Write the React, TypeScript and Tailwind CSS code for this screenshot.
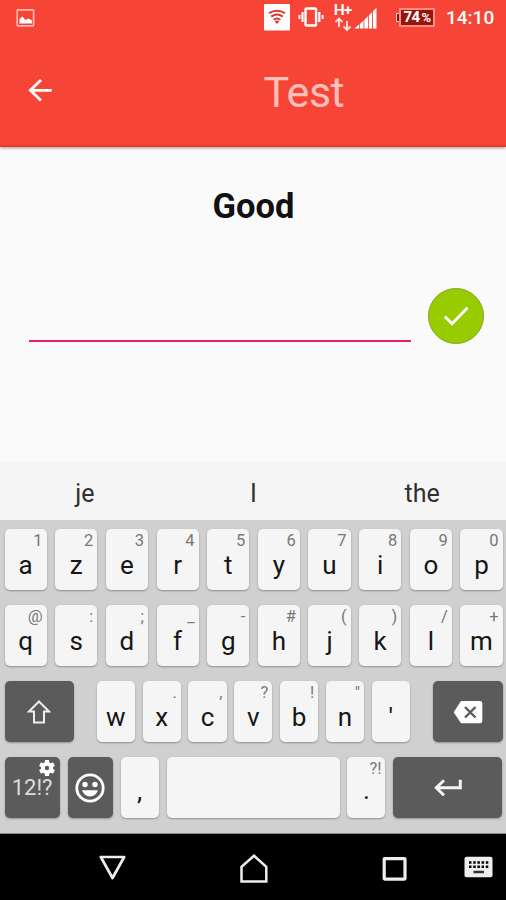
import React from 'react';

interface KeyData {
  label: string;
  hint?: string;
}

const ROW_ONE: KeyData[] = [
  { label: 'a', hint: '1' },
  { label: 'z', hint: '2' },
  { label: 'e', hint: '3' },
  { label: 'r', hint: '4' },
  { label: 't', hint: '5' },
  { label: 'y', hint: '6' },
  { label: 'u', hint: '7' },
  { label: 'i', hint: '8' },
  { label: 'o', hint: '9' },
  { label: 'p', hint: '0' },
];

const ROW_TWO: KeyData[] = [
  { label: 'q', hint: '@' },
  { label: 's', hint: ':' },
  { label: 'd', hint: ';' },
  { label: 'f', hint: '_' },
  { label: 'g', hint: '-' },
  { label: 'h', hint: '#' },
  { label: 'j', hint: '(' },
  { label: 'k', hint: ')' },
  { label: 'l', hint: '/' },
  { label: 'm', hint: '+' },
];

const ROW_THREE: KeyData[] = [
  { label: 'w' },
  { label: 'x', hint: '.' },
  { label: 'c', hint: ',' },
  { label: 'v', hint: '?' },
  { label: 'b', hint: '!' },
  { label: 'n', hint: '"' },
  { label: "'" },
];

const SUGGESTIONS = ['je', 'I', 'the'];

const LIGHT_KEY = 'flex h-[61px] flex-col rounded-[5px] bg-[#f5f5f5] pt-1 shadow-[0_1px_2px_#8f8f8f]';
const DARK_KEY = 'flex h-[61px] items-center justify-center rounded-[5px] bg-[#5b5b5b] text-[#f5f5f5] shadow-[0_1px_2px_#8f8f8f]';

function LetterKey({ label, hint }: KeyData) {
  return (
    <button className={LIGHT_KEY}>
      <span className="h-4 w-full pr-1 text-right text-[16.5px] leading-4 text-[#777]">{hint}</span>
      <span className="mt-[3px] w-full text-center text-[26px] leading-[26px] text-[#161616]">{label}</span>
    </button>
  );
}

function StatusBar() {
  return (
    <div className="flex h-9 items-start text-white">
      {/* Screenshot-Benachrichtigung */}
      <svg className="mt-[9px] ml-4 h-[18px] w-[19px]" viewBox="0 0 19 18">
        <rect x="1.2" y="0.8" width="16.4" height="16" rx="0.8" fill="none" stroke="#ffb8b0" strokeWidth="1.7" />
        <path d="M3.5 14.5V10L6.5 7.5L9.5 11L12.5 9.5L16 11.5V14.5Z" fill="#fff" />
      </svg>

      {/* WLAN */}
      <svg className="mt-1 ml-[229px] h-[27px] w-[26px]" viewBox="0 0 26 27">
        <rect width="26" height="26.5" rx="1" fill="#fff" />
        <g fill="none" stroke="#d93a2e" strokeWidth="2">
          <path d="M5 9.2Q13 4.2 21 9.2" />
          <path d="M7.2 12.6Q13 8.6 18.8 12.6" />
          <path d="M9.6 15.8Q13 13.2 16.4 15.8" />
        </g>
        <path d="M10.6 17.2Q13 15.6 15.4 17.2L13 20Z" fill="#d93a2e" />
      </svg>

      {/* Vibration */}
      <svg className="mt-[7px] ml-2 h-5 w-[26px]" viewBox="0 0 26 20" fill="none" stroke="#fff">
        <rect x="7.5" y="1.5" width="10.6" height="17" rx="1" strokeWidth="2.4" />
        <path d="M4.5 5V15M21.3 5V15" strokeWidth="2.2" />
        <path d="M1.4 8V12M24.6 8V12" strokeWidth="2" />
      </svg>

      {/* Mobile Daten */}
      <div className="mt-[3px] ml-2 flex w-[21px] flex-col items-center">
        <span className="h-[14px] text-[15.5px] leading-[15px] font-semibold tracking-[-1px]">H+</span>
        <svg className="h-[14px] w-[18px]" viewBox="0 0 18 14" fill="none" stroke="#ffe5e2" strokeWidth="1.8">
          <path d="M5 10V2M1.5 5L5 1.5L8.5 5" />
          <path d="M13 4V12.5M9.5 9.5L13 13L16.5 9.5" />
        </svg>
      </div>
      <svg className="mt-[7px] ml-[1px] h-[22px] w-[23px]" viewBox="0 0 23 22" fill="#fff">
        <path d="M0.500 21.500L5 17.500V21.500ZM5.800 17L9.500 13.500V21.500H5.800ZM10.300 12.800L14 9.200V21.500H10.300ZM14.800 8.300L18 5.200V21.500H14.800ZM18.900 4.200L22.500 0.800V21.500H18.900Z" />
      </svg>

      {/* Akku */}
      <div className="mt-2 ml-[19px] flex h-[19px] items-center">
        <div className="h-[9px] w-[3px] border border-r-0 border-[#ffc1ba] bg-[#96160f]" />
        <div className="flex h-[19px] w-[36px] items-center justify-center border-2 border-[#ff8c82] bg-[#96160f] text-[15px] leading-none font-bold tracking-[-0.6px] whitespace-nowrap">
          <span>74</span>
          <span className="ml-[2px] text-[13px]">%</span>
        </div>
      </div>

      <span className="mt-2 ml-[11px] text-[19px] leading-5 font-medium">14:10</span>
    </div>
  );
}

function AppBar() {
  return (
    <div className="flex h-[110px] items-start">
      <svg className="mt-[42px] ml-[27px] h-6 w-[26px]" viewBox="0 0 26 24" fill="none" stroke="#fff" strokeWidth="2.8">
        <path d="M24.7 12.3H3M14 2L3.3 12.3L14 22.6" />
      </svg>
      <h1 className="mt-[35px] ml-[210.5px] text-[43px] leading-[43px] tracking-[-0.5px] text-[#ffc0ba]">Test</h1>
    </div>
  );
}

function Keyboard() {
  return (
    <div className="h-[372px] bg-[#f5f5f5]">
      <div className="grid h-[58px] grid-cols-3 items-center text-center text-[25px] text-[#303030]">
        {SUGGESTIONS.map((word) => (
          <span key={word} className="pt-[5px] pl-px">{word}</span>
        ))}
      </div>

      <div className="flex h-[314px] flex-col gap-[15px] border-b border-[#888] bg-[#d0d0d0] pt-[9px] pr-[3.5px] pl-[4.6px]">
        {[ROW_ONE, ROW_TWO].map((row, i) => (
          <div key={i} className="grid grid-cols-10 gap-[8.6px]">
            {row.map((k) => (
              <LetterKey key={k.label} {...k} />
            ))}
          </div>
        ))}

        <div className="flex justify-between">
          <button className={`${DARK_KEY} w-[69px]`}>
            <svg className="h-6 w-6" viewBox="0 0 24 24" fill="none" stroke="#eee" strokeWidth="2">
              <path d="M12 1.5L22 11.5H17V22.5H7V11.5H2Z" />
            </svg>
          </button>
          <div className="grid w-[313px] grid-cols-7 gap-[7.7px]">
            {ROW_THREE.map((k) => (
              <LetterKey key={k.label} {...k} />
            ))}
          </div>
          <button className={`${DARK_KEY} w-[69.5px]`}>
            <svg className="h-6 w-[30px]" viewBox="0 0 30 24">
              <path d="M8 1H27Q29.3 1 29.3 3.3V21Q29.3 23.3 27 23.3H8L0.7 12.2Z" fill="#fff" />
              <path d="M12 7L22.5 17.5M22.5 7L12 17.5" stroke="#5b5b5b" strokeWidth="2.4" />
            </svg>
          </button>
        </div>

        <div className="flex justify-between">
          <button className={`${DARK_KEY} relative w-[55px]`}>
            <span className="text-[22px] leading-none text-[#ddd]">12!?</span>
            <svg className="absolute top-[3px] right-[4.5px] h-4 w-4" viewBox="2 2 20 20" fill="#fff">
              <path d="M19.43 12.98c.04-.32.07-.64.07-.98s-.03-.66-.07-.98l2.11-1.65c.19-.15.24-.42.12-.64l-2-3.46c-.12-.22-.39-.3-.61-.22l-2.49 1c-.52-.4-1.08-.73-1.69-.98l-.38-2.65C14.46 2.18 14.25 2 14 2h-4c-.25 0-.46.18-.49.42l-.38 2.65c-.61.25-1.17.59-1.69.98l-2.49-1c-.23-.09-.49 0-.61.22l-2 3.46c-.13.22-.07.49.12.64l2.11 1.65c-.04.32-.07.65-.07.98s.03.66.07.98l-2.11 1.65c-.19.15-.24.42-.12.64l2 3.46c.12.22.39.3.61.22l2.49-1c.52.4 1.08.73 1.69.98l.38 2.65c.03.24.24.42.49.42h4c.25 0 .46-.18.49-.42l.38-2.65c.61-.25 1.17-.59 1.69-.98l2.49 1c.23.09.49 0 .61-.22l2-3.46c.12-.22.07-.49-.12-.64zM12 14.8a2.8 2.8 0 1 1 0-5.6 2.8 2.8 0 0 1 0 5.6z" />
            </svg>
          </button>
          <button className={`${DARK_KEY} w-[45px]`}>
            <svg className="h-[30px] w-[30px]" viewBox="0 0 30 30">
              <circle cx="15" cy="15" r="13.2" fill="none" stroke="#fff" strokeWidth="2.8" />
              <circle cx="10" cy="11.5" r="2.7" fill="#fff" />
              <circle cx="20" cy="11.5" r="2.7" fill="#fff" />
              <path d="M7 17.3H23Q20.5 23.5 15 23.5Q9.5 23.5 7 17.3Z" fill="#fff" />
            </svg>
          </button>
          <button className={`${LIGHT_KEY} w-[38px]`}>
            <span className="mt-[17px] w-full text-center text-[26px] leading-[26px] text-[#161616]">,</span>
          </button>
          <button className={`${LIGHT_KEY} w-[173px]`} aria-label="space" />
          <button className={`${LIGHT_KEY} w-[38px]`}>
            <span className="h-4 w-full pr-1 text-right text-[16.5px] leading-4 text-[#777]">?!</span>
            <span className="w-full text-center text-[26px] leading-[26px] text-[#161616]">.</span>
          </button>
          <button className={`${DARK_KEY} w-[109px]`}>
            <svg className="h-[17px] w-7" viewBox="0 0 28 17" fill="none" stroke="#f5f5f5" strokeWidth="3">
              <path d="M26.3 0.8V8.8H3M10 1.2L2.3 8.8L10 16.3" />
            </svg>
          </button>
        </div>
      </div>
    </div>
  );
}

function NavigationBar() {
  return (
    <div className="flex h-[66px] items-start bg-black text-[#eee]">
      <svg className="mt-5 ml-[98px] h-[26px] w-7" viewBox="0 0 28 26" fill="none" stroke="currentColor" strokeWidth="2.7" strokeLinejoin="round">
        <path d="M2.8 3H26.2L14.5 24Z" />
      </svg>
      <svg className="mt-[19px] ml-[113px] h-[31px] w-[30px]" viewBox="0 0 30 31" fill="none" stroke="currentColor" strokeWidth="2.5">
        <path d="M2.5 28.5V13.8L15 2.7L27.3 13.8V28.5Z" />
      </svg>
      <svg className="mt-[22px] ml-[113px] h-[26px] w-[26px]" viewBox="0 0 26 26" fill="none" stroke="currentColor" strokeWidth="3.2">
        <rect x="2.2" y="2.6" width="20.8" height="20.5" rx="0.5" />
      </svg>
      <svg className="mt-[22px] ml-[56px] h-[22px] w-[29px]" viewBox="0 0 29 22">
        <rect x="0.5" y="0.7" width="28" height="20.5" rx="2" fill="#eee" />
        <path d="M5 6.5H24.5M5 10.7H24.5" stroke="#000" strokeWidth="2.6" strokeDasharray="2.5 1.7" />
        <path d="M9.5 16H20" stroke="#333" strokeWidth="2.5" />
      </svg>
    </div>
  );
}

export default function App() {
  return (
    <div className="flex h-[900px] w-[506px] flex-col overflow-hidden bg-[#fafafa] font-['Roboto',sans-serif]">
      <header className="relative h-[147px] shrink-0 border-b-2 border-[#ee3527] bg-[#f64437] shadow-[0_1px_3px_#999]">
        <StatusBar />
        <AppBar />
      </header>

      <main className="h-[315px] shrink-0">
        <h2 className="pt-[42px] pl-px text-center text-[34.5px] leading-[35px] font-bold text-[#111]">Good</h2>
        <div className="mt-[64px] flex items-start pl-[28.5px]">
          <input className="h-[54px] w-[382px] border-b-2 border-[#e91e70] bg-transparent outline-none" />
          <button className="ml-[17px] flex h-14 w-14 items-center justify-center rounded-full border border-[#84a526] bg-[#99cc00]">
            <svg className="h-[20px] w-[26px]" viewBox="0 0 26 20" fill="none" stroke="#fff" strokeWidth="2.9">
              <path d="M1.8 10.5L9 17.7L24.5 1.8" />
            </svg>
          </button>
        </div>
      </main>

      <Keyboard />
      <NavigationBar />
    </div>
  );
}
